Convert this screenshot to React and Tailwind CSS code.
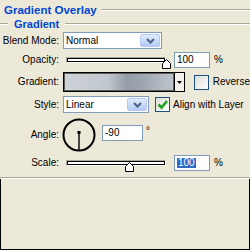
import React from 'react';

const Etch = ({ className = '' }) => (
  <div className={`h-[2px] border-t border-t-[#ACA899] border-b border-b-white ${className}`} />
);

const Label = ({ children }) => (
  <div className="w-[59px] shrink-0 text-right text-[10px] leading-none">{children}</div>
);

const Chevron = () => (
  <svg width="9" height="6" viewBox="0 0 9 6">
    <polyline points="1,1 4.5,4.5 8,1" fill="none" stroke="#4D6185" strokeWidth="2" />
  </svg>
);

const Select = ({ value, width }) => (
  <div className={`flex items-center h-[17px] ${width} bg-white border border-[#7F9DB9]`}>
    <span className="flex-1 pl-[2px] text-[10px] leading-none">{value}</span>
    <div className="w-[20px] h-[13px] mr-[1px] rounded-[2px] border border-[#B5C8F5] bg-linear-to-b from-[#E3EBFD] to-[#B4C9F5] flex items-center justify-center">
      <Chevron />
    </div>
  </div>
);

const Slider = ({ thumbLeft }) => (
  <div className="relative w-[100px] h-[6px] border-t border-l border-[#ACA899] border-r border-b border-r-white border-b-white">
    <div className="h-full border border-black bg-white" />
    <svg
      width="9"
      height="10"
      viewBox="0 0 9 10"
      className="absolute top-[1px]"
      style={{ left: thumbLeft }}
    >
      <polygon points="4.5,0.5 8.5,4.5 8.5,9.5 0.5,9.5 0.5,4.5" fill="#fff" stroke="#000" />
    </svg>
  </div>
);

const Checkbox = ({ checked }) => (
  <div className="w-[15px] h-[15px] shrink-0 border border-[#1C5180] bg-linear-to-br from-[#DCDCD7] to-white flex items-center justify-center">
    {checked && (
      <svg width="13" height="13" viewBox="0 0 13 13">
        <path d="M2.5 6.5 L5.5 9.5 L11 3" fill="none" stroke="#21A121" strokeWidth="2.6" />
      </svg>
    )}
  </div>
);

const Field = ({ children, width }) => (
  <div className={`flex items-center h-[16px] ${width} bg-white border border-[#7F9DB9] pl-[2px] text-[10px] leading-none`}>
    {children}
  </div>
);

export default function App() {
  return (
    <div className="w-[250px] h-[250px] bg-[#ECE9D8] overflow-hidden flex flex-col text-black font-['Liberation_Sans',Arial,sans-serif]">
      {/* Title */}
      <div className="h-[20px] flex items-center shrink-0">
        <span className="pl-[4px] pr-[4px] text-[11.5px] font-bold leading-[14px] text-[#0046D5]">Gradient Overlay</span>
        <Etch className="flex-1" />
      </div>

      {/* Group legend */}
      <div className="h-[8px] flex items-center shrink-0">
        <Etch className="w-[8px]" />
        <span className="ml-[6px] mr-[6px] text-[11px] font-bold leading-[14px] text-[#0046D5]">Gradient</span>
        <Etch className="flex-1" />
      </div>

      <div className="flex flex-col pt-[4px] shrink-0">
        {/* Blend mode */}
        <div className="flex items-center h-[17px]">
          <Label>Blend Mode:</Label>
          <div className="ml-[4px]">
            <Select value="Normal" width="w-[99px]" />
          </div>
        </div>

        {/* Opacity */}
        <div className="flex items-center h-[16px] mt-[3px]">
          <Label>Opacity:</Label>
          <div className="ml-[7px]">
            <Slider thumbLeft={95} />
          </div>
          <div className="ml-[8px]">
            <Field width="w-[36px]">100</Field>
          </div>
          <span className="ml-[4px] text-[10px] leading-none">%</span>
        </div>

        {/* Gradient */}
        <div className="flex items-center h-[20px] mt-[4px]">
          <Label>Gradient:</Label>
          <div className="ml-[4px] flex h-[20px] w-[123px] border border-black">
            <div className="flex-1 border border-[#5C5C5C] bg-[linear-gradient(to_right,#CED3D9_0%,#C0C6CD_40%,#959DA9_57%,#9DA5B0_72%,#BEC5CC_100%)]" />
            <div className="w-[10px] border-l border-black bg-[#F2F0E9] flex items-center justify-center">
              <svg width="5" height="3" viewBox="0 0 5 3">
                <polygon points="0,0 5,0 2.5,3" fill="#000" />
              </svg>
            </div>
          </div>
          <div className="ml-[9px]">
            <Checkbox checked={false} />
          </div>
          <span className="ml-[4px] text-[10px] leading-none whitespace-nowrap">Reverse</span>
        </div>

        {/* Style */}
        <div className="flex items-center h-[17px] mt-[4px]">
          <Label>Style:</Label>
          <div className="ml-[4px]">
            <Select value="Linear" width="w-[86px]" />
          </div>
          <div className="ml-[6px]">
            <Checkbox checked />
          </div>
          <span className="ml-[3px] text-[10px] leading-none whitespace-nowrap">Align with Layer</span>
        </div>

        {/* Angle */}
        <div className="flex h-[34px] mt-[5px]">
          <div className="self-center">
            <Label>Angle:</Label>
          </div>
          <svg width="34" height="34" viewBox="0 0 34 34" className="ml-[3px]">
            <circle cx="17" cy="17" r="15.5" fill="none" stroke="#000" strokeWidth="2" />
            <line x1="17" y1="15" x2="17" y2="32" stroke="#000" strokeWidth="1.4" />
            <rect x="15.5" y="13" width="3" height="3" fill="#000" />
          </svg>
          <div className="ml-[6px] mt-[7px]">
            <Field width="w-[41px]">-90</Field>
          </div>
          <span className="ml-[3px] mt-[8px] text-[10px] leading-none">°</span>
        </div>

        {/* Scale */}
        <div className="flex items-center h-[16px] mt-[3px]">
          <Label>Scale:</Label>
          <div className="ml-[7px]">
            <Slider thumbLeft={58} />
          </div>
          <div className="ml-[8px]">
            <Field width="w-[36px]">
              <span className="bg-[#316AC5] text-white px-[1px]">100</span>
            </Field>
          </div>
          <span className="ml-[4px] text-[10px] leading-none">%</span>
        </div>
      </div>

      <Etch className="mt-[6px] shrink-0" />
      <div className="flex-1 border-l border-r border-b border-black" />
    </div>
  );
}
